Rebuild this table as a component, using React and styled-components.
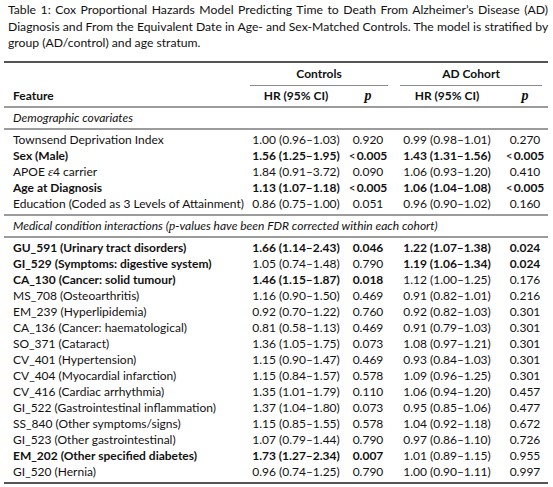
import styled, { createGlobalStyle } from "styled-components";

const GlobalStyle = createGlobalStyle`
  body {
    margin: 0;
    background: #fff;
    color: #111;
    font-family: Lato, "Liberation Sans", Arial, sans-serif;
  }
`;

const Page = styled.div`
  width: 553px;
  padding: 2px 5px 0 4px;
  box-sizing: border-box;
`;

const Caption = styled.p`
  margin: 0 0 9px 4px;
  font-size: 12.2px;
  line-height: 16.5px;
`;

const CaptionLine = styled.span`
  display: block;
  white-space: nowrap;
  text-align: ${(p) => (p.$last ? "left" : "justify")};
  text-align-last: ${(p) => (p.$last ? "left" : "justify")};
`;

const Table = styled.table`
  width: 544px;
  border-collapse: collapse;
  table-layout: fixed;
  font-size: 12px;
  line-height: 16px;
  border-top: 2px solid #555;
  border-bottom: 2px solid #555;
`;

const Head = styled.thead`
  border-bottom: 2px solid #9c9c9c;
`;

const Section = styled.tbody`
  border-bottom: ${(p) => (p.$rule ? "2px solid #9c9c9c" : "none")};
  tr:first-child td {
    padding-top: 2px;
  }
  tr:last-child td {
    padding-bottom: 2px;
  }
`;

const Th = styled.th`
  padding: ${(p) => (p.$group ? "3px 0 0" : "2px 4px 2px")};
  text-align: ${(p) => p.$align || "center"};
  font-weight: 700;
  white-space: nowrap;
`;

const GroupLabel = styled.div`
  margin: 0 ${(p) => p.$right}px 0 ${(p) => p.$left}px;
  padding-bottom: 3px;
  border-bottom: 1px solid #8a8a8a;
`;

const Cell = styled.td`
  padding: 0 2px;
  text-align: center;
  font-weight: ${(p) => (p.$bold ? 700 : 400)};
  white-space: nowrap;
`;

const Label = styled(Cell)`
  text-align: left;
  padding-left: 9px;
`;

const SectionTitle = styled.td`
  padding: 0 9px;
  font-style: italic;
  white-space: nowrap;
`;

const MathP = styled.span`
  font-family: "Liberation Serif", "Times New Roman", serif;
  font-style: italic;
  font-weight: ${(p) => (p.$bold ? 700 : 400)};
  font-size: ${(p) => (p.$bold ? "14px" : "13px")};
  line-height: 1;
`;

const Lt = styled.span`
  font-weight: 400;
  margin-right: 1px;
`;

const demographics = [
  ["Townsend Deprivation Index", "1.00 (0.96–1.03)", "0.920", "0.99 (0.98–1.01)", "0.270", false, false],
  ["Sex (Male)", "1.56 (1.25–1.95)", "<0.005", "1.43 (1.31–1.56)", "<0.005", true, true],
  ["APOE ε4 carrier", "1.84 (0.91–3.72)", "0.090", "1.06 (0.93–1.20)", "0.410", false, false],
  ["Age at Diagnosis", "1.13 (1.07–1.18)", "<0.005", "1.06 (1.04–1.08)", "<0.005", true, true],
  ["Education (Coded as 3 Levels of Attainment)", "0.86 (0.75–1.00)", "0.051", "0.96 (0.90–1.02)", "0.160", false, false],
];

const conditions = [
  ["GU_591 (Urinary tract disorders)", "1.66 (1.14–2.43)", "0.046", "1.22 (1.07–1.38)", "0.024", true, true],
  ["GI_529 (Symptoms: digestive system)", "1.05 (0.74–1.48)", "0.790", "1.19 (1.06–1.34)", "0.024", false, true],
  ["CA_130 (Cancer: solid tumour)", "1.46 (1.15–1.87)", "0.018", "1.12 (1.00–1.25)", "0.176", true, false],
  ["MS_708 (Osteoarthritis)", "1.16 (0.90–1.50)", "0.469", "0.91 (0.82–1.01)", "0.216", false, false],
  ["EM_239 (Hyperlipidemia)", "0.92 (0.70–1.22)", "0.760", "0.92 (0.82–1.03)", "0.301", false, false],
  ["CA_136 (Cancer: haematological)", "0.81 (0.58–1.13)", "0.469", "0.91 (0.79–1.03)", "0.301", false, false],
  ["SO_371 (Cataract)", "1.36 (1.05–1.75)", "0.073", "1.08 (0.97–1.21)", "0.301", false, false],
  ["CV_401 (Hypertension)", "1.15 (0.90–1.47)", "0.469", "0.93 (0.84–1.03)", "0.301", false, false],
  ["CV_404 (Myocardial infarction)", "1.15 (0.84–1.57)", "0.578", "1.09 (0.96–1.25)", "0.301", false, false],
  ["CV_416 (Cardiac arrhythmia)", "1.35 (1.01–1.79)", "0.110", "1.06 (0.94–1.20)", "0.457", false, false],
  ["GI_522 (Gastrointestinal inflammation)", "1.37 (1.04–1.80)", "0.073", "0.95 (0.85–1.06)", "0.477", false, false],
  ["SS_840 (Other symptoms/signs)", "1.15 (0.85–1.55)", "0.578", "1.04 (0.92–1.18)", "0.672", false, false],
  ["GI_523 (Other gastrointestinal)", "1.07 (0.79–1.44)", "0.790", "0.97 (0.86–1.10)", "0.726", false, false],
  ["EM_202 (Other specified diabetes)", "1.73 (1.27–2.34)", "0.007", "1.01 (0.89–1.15)", "0.955", true, false],
  ["GI_520 (Hernia)", "0.96 (0.74–1.25)", "0.790", "1.00 (0.90–1.11)", "0.997", false, false],
];

function Value({ text }) {
  if (text.startsWith("<")) {
    return (
      <>
        <Lt>&lt;</Lt>
        {text.slice(1)}
      </>
    );
  }
  return text;
}

function FeatureText({ text }) {
  const i = text.indexOf("ε");
  if (i < 0) return text;
  return (
    <>
      {text.slice(0, i)}
      <MathP>ε</MathP>
      {text.slice(i + 1)}
    </>
  );
}

function Row({ row }) {
  const [label, hr1, p1, hr2, p2, b1, b2] = row;
  return (
    <tr>
      <Label $bold={b1 || b2}>
        <FeatureText text={label} />
      </Label>
      <Cell $bold={b1}>{hr1}</Cell>
      <Cell $bold={b1}>
        <Value text={p1} />
      </Cell>
      <Cell $bold={b2}>{hr2}</Cell>
      <Cell $bold={b2}>
        <Value text={p2} />
      </Cell>
    </tr>
  );
}

export default function App() {
  return (
    <Page>
      <GlobalStyle />
      <Caption>
        <CaptionLine>
          Table 1: Cox Proportional Hazards Model Predicting Time to Death From Alzheimer’s Disease (AD)
        </CaptionLine>
        <CaptionLine>
          Diagnosis and From the Equivalent Date in Age- and Sex-Matched Controls. The model is stratified by
        </CaptionLine>
        <CaptionLine $last>group (AD/control) and age stratum.</CaptionLine>
      </Caption>
      <Table>
        <colgroup>
          <col style={{ width: 244 }} />
          <col style={{ width: 96 }} />
          <col style={{ width: 48 }} />
          <col style={{ width: 110 }} />
          <col style={{ width: 46 }} />
        </colgroup>
        <Head>
          <tr>
            <Th />
            <Th colSpan={2} $group>
              <GroupLabel $left={2} $right={4}>Controls</GroupLabel>
            </Th>
            <Th colSpan={2} $group>
              <GroupLabel $left={8} $right={6}>AD Cohort</GroupLabel>
            </Th>
          </tr>
          <tr>
            <Th $align="left" style={{ paddingLeft: 9 }}>Feature</Th>
            <Th>HR (95% CI)</Th>
            <Th>
              <MathP $bold>p</MathP>
            </Th>
            <Th>HR (95% CI)</Th>
            <Th>
              <MathP $bold>p</MathP>
            </Th>
          </tr>
        </Head>
        <Section $rule>
          <tr>
            <SectionTitle colSpan={5}>Demographic covariates</SectionTitle>
          </tr>
        </Section>
        <Section $rule>
          {demographics.map((r) => (
            <Row key={r[0]} row={r} />
          ))}
        </Section>
        <Section $rule>
          <tr>
            <SectionTitle colSpan={5}>
              Medical condition interactions (<MathP>p</MathP>-values have been FDR corrected within each cohort)
            </SectionTitle>
          </tr>
        </Section>
        <Section>
          {conditions.map((r) => (
            <Row key={r[0]} row={r} />
          ))}
        </Section>
      </Table>
    </Page>
  );
}
